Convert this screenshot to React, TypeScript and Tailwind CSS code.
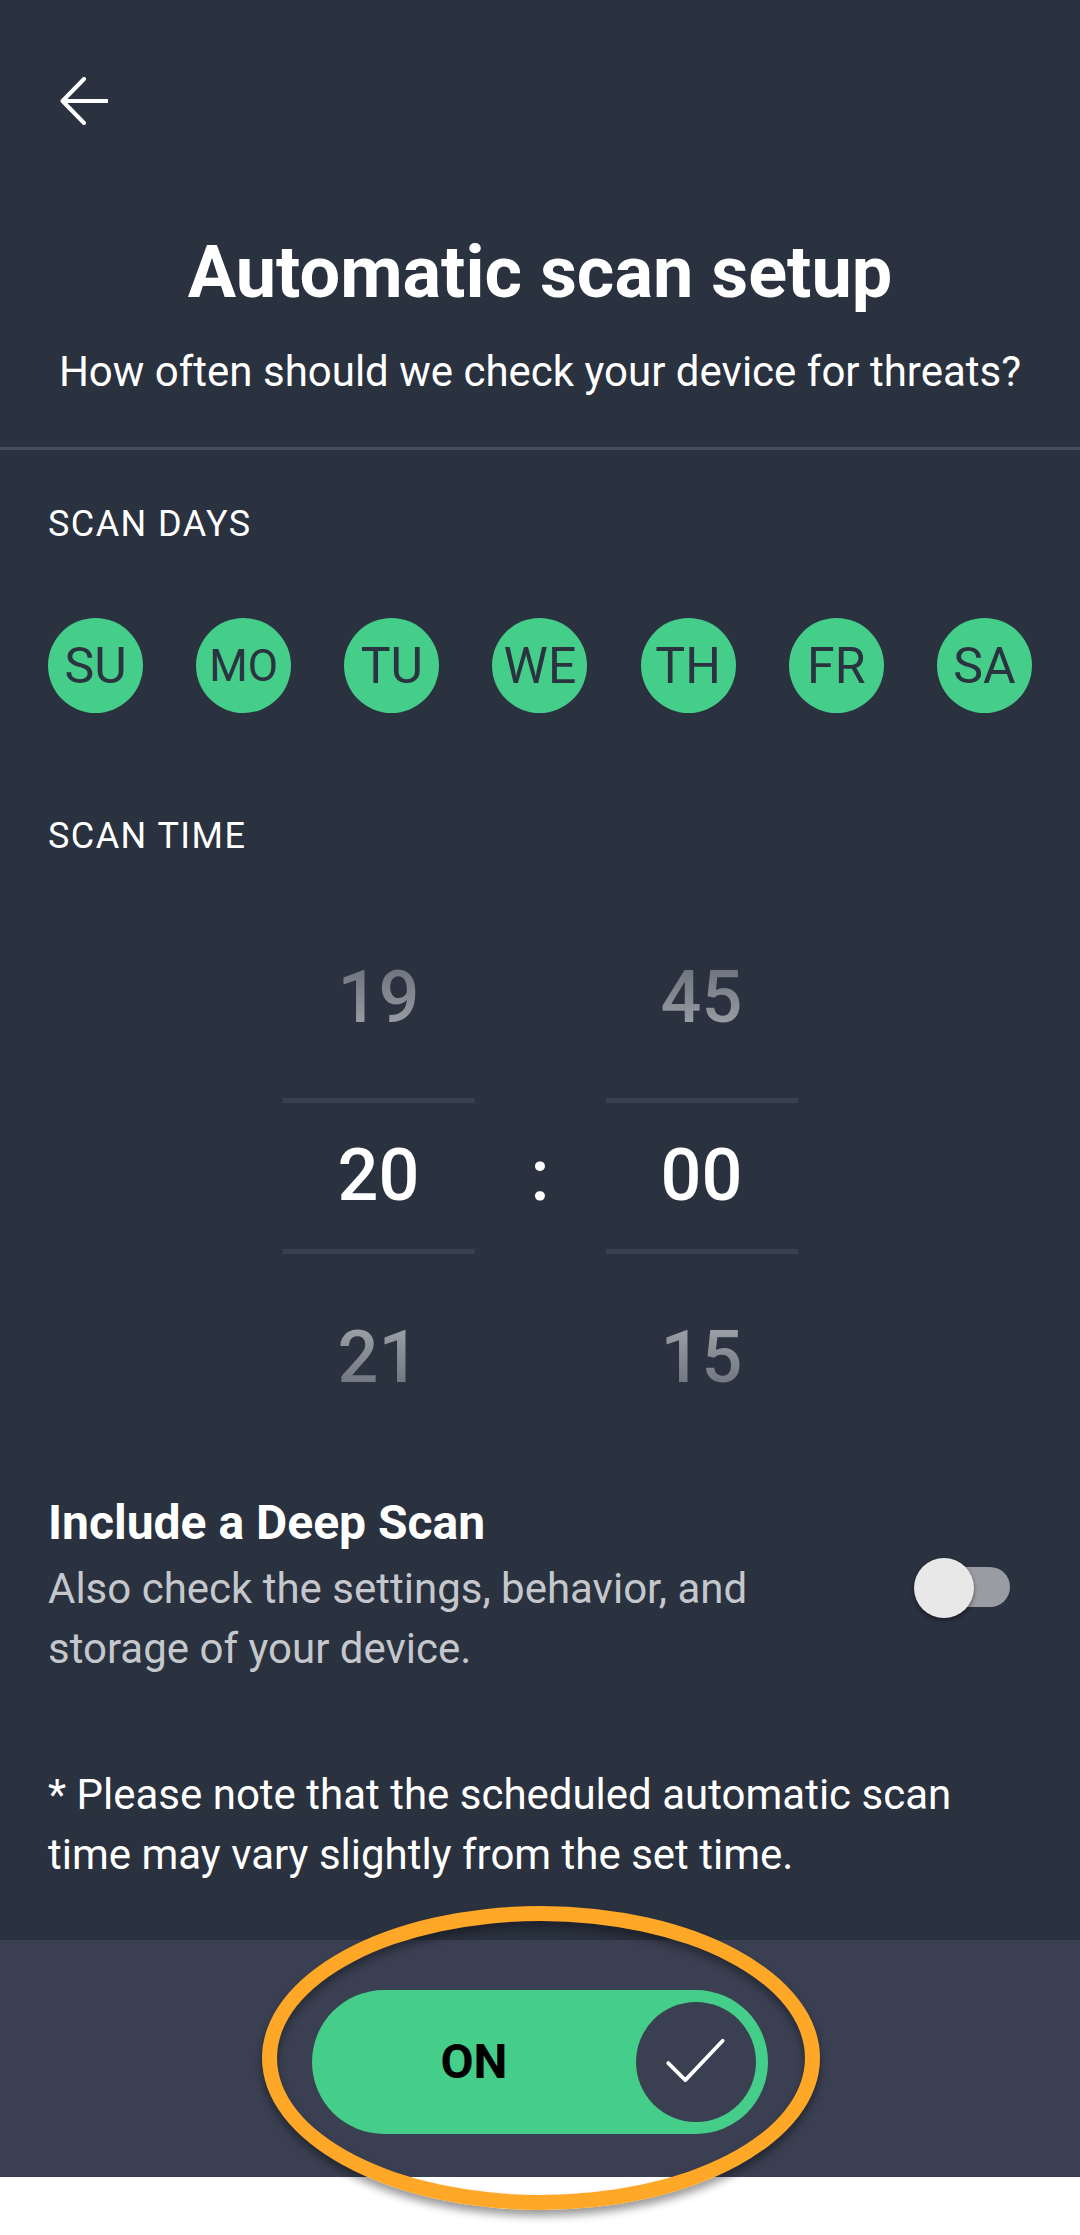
import React from "react";

const days = ["SU", "MO", "TU", "WE", "TH", "FR", "SA"];

function TimeColumn({ prev, current, next }: { prev: string; current: string; next: string }) {
  return (
    <div className="flex w-[192px] flex-col items-center">
      <div className="flex h-[180px] w-full items-center justify-center">
        <span className="bg-linear-to-b from-[#676d77] to-[#a3a7ad] bg-clip-text text-[72px] font-medium leading-[80px] text-transparent">
          {prev}
        </span>
      </div>
      <div className="mt-[10px] flex h-[156px] w-full items-center justify-center border-y-[5px] border-[#394050]">
        <span className="text-[72px] font-medium leading-[80px] text-white">{current}</span>
      </div>
      <div className="mt-[14px] flex h-[180px] w-full items-center justify-center">
        <span className="bg-linear-to-b from-[#a3a7ad] to-[#676d77] bg-clip-text text-[72px] font-medium leading-[80px] text-transparent">
          {next}
        </span>
      </div>
    </div>
  );
}

export default function App() {
  return (
    <div className="relative h-[2235px] w-[1080px] overflow-hidden bg-white font-['Roboto',sans-serif]">
      {/* main panel */}
      <div className="flex h-[1940px] flex-col bg-[#2a313f]">
        <div className="pl-[60px] pt-[77px]">
          <svg width="48" height="48" viewBox="0 0 48 48" fill="none">
            <path
              d="M47 24H3M24 2L2.5 24L24 46"
              stroke="white"
              strokeWidth="4"
              strokeLinecap="round"
              strokeLinejoin="round"
            />
          </svg>
        </div>

        <h1 className="mt-[112px] text-center text-[72px] font-bold leading-[72px] text-white">
          Automatic scan setup
        </h1>
        <p className="mt-[38px] text-center text-[42px] leading-[50px] text-white">
          How often should we check your device for threats?
        </p>
        <div className="mt-[50px] h-[3px] w-full bg-[#464d5c]" />

        {/* scan days */}
        <div className="mt-[54px] px-[48px] text-[36px] leading-[40px] tracking-[0.04em] text-white">
          SCAN DAYS
        </div>
        <div className="mt-[74px] flex justify-between px-[48px]">
          {days.map((d) => (
            <div
              key={d}
              className="flex h-[95px] w-[95px] items-center justify-center rounded-full bg-[#45cd8a] text-[#2b3240]"
            >
              <span className={d === "MO" ? "text-[44px] leading-none" : "text-[50px] leading-none"}>{d}</span>
            </div>
          ))}
        </div>

        {/* scan time */}
        <div className="mt-[103px] px-[48px] text-[36px] leading-[40px] tracking-[0.04em] text-white">
          SCAN TIME
        </div>
        <div className="mt-[52px] flex justify-center">
          <TimeColumn prev="19" current="20" next="21" />
          <div className="flex w-[131px] flex-col items-center">
            <div className="mt-[190px] flex h-[156px] items-center justify-center">
              <span className="text-[72px] font-medium leading-[80px] text-white">:</span>
            </div>
          </div>
          <TimeColumn prev="45" current="00" next="15" />
        </div>

        {/* deep scan */}
        <div className="mt-[49px] flex items-center justify-between pl-[48px] pr-[70px]">
          <div className="w-[760px]">
            <div className="text-[48px] font-bold leading-[52px] text-white">Include a Deep Scan</div>
            <div className="mt-[10px] w-[720px] text-[42px] leading-[60px] text-[#c4c7cc]">
              Also check the settings, behavior, and storage of your device.
            </div>
          </div>
          <div className="relative h-[60px] w-[96px]">
            <div className="absolute right-0 top-[9px] h-[40px] w-[84px] rounded-full bg-[#9a9ca3]" />
            <div className="absolute left-0 top-0 h-[60px] w-[60px] rounded-full bg-[#e8e8e8] shadow-[0_2px_4px_rgba(0,0,0,0.45)]" />
          </div>
        </div>

        <p className="mt-[86px] w-[1000px] pl-[48px] text-[42px] leading-[60px] text-white">
          * Please note that the scheduled automatic scan time may vary slightly from the set time.
        </p>
      </div>

      {/* bottom bar */}
      <div className="flex h-[237px] items-center justify-center bg-[#3a4052]">
        <div className="mt-[6px] flex h-[144px] w-[456px] items-center rounded-full bg-[#45cd8a] pr-[12px]">
          <span className="flex-1 text-center text-[48px] font-bold text-black">ON</span>
          <div className="flex h-[120px] w-[120px] items-center justify-center rounded-full bg-[#3a4052]">
            <svg width="64" height="64" viewBox="0 0 60 60" fill="none">
              <path
                d="M4 31L20 47L55 10"
                stroke="white"
                strokeWidth="3.5"
                strokeLinecap="round"
                strokeLinejoin="round"
              />
            </svg>
          </div>
        </div>
      </div>

      {/* highlight ring */}
      <div className="absolute left-[262px] top-[1906px] h-[304px] w-[558px] rounded-[50%] border-[15px] border-[#ffa726] shadow-[0_6px_8px_rgba(0,0,0,0.4),inset_0_6px_8px_rgba(0,0,0,0.35)]" />
    </div>
  );
}
